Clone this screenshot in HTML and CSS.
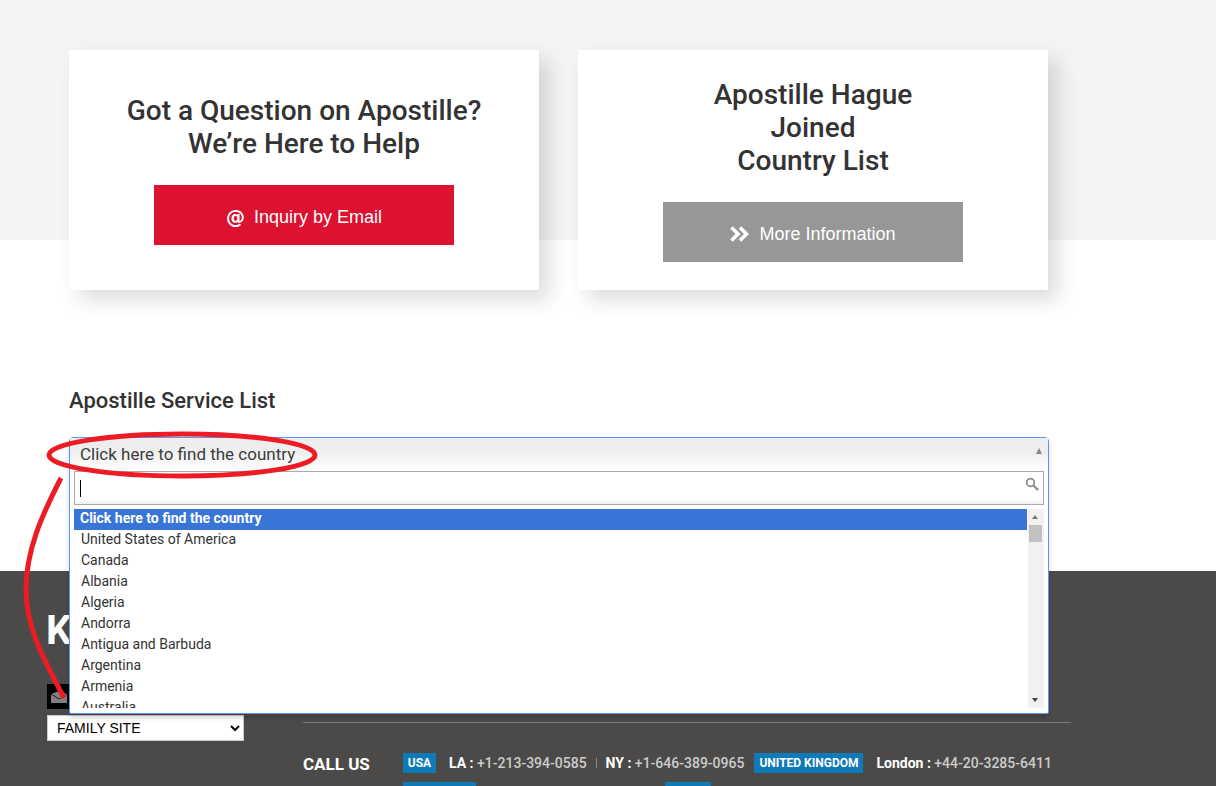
FILE: index.html
```html
<!DOCTYPE html>
<html lang="en">
<head>
<meta charset="utf-8">
<title>Apostille Service</title>
<link rel="stylesheet" href="styles.css">
</head>
<body>
<div class="page">
  <main class="main">
    <div class="cards">
      <section class="card card-a">
        <h2 class="card-title">Got a Question on Apostille?<br>We’re Here to Help</h2>
        <a class="btn btn-red"><span class="at">@</span>Inquiry by Email</a>
      </section>
      <section class="card card-b">
        <h2 class="card-title">Apostille Hague<br>Joined<br>Country List</h2>
        <a class="btn btn-gray">
          <svg class="chev" width="19" height="16" viewBox="0 0 19 16"><path d="M1.500 1.500 8 8l-6.500 6.500M10 1.500 16.500 8 10 14.500" fill="none" stroke="#fff" stroke-width="3.600"/></svg>More Information</a>
      </section>
    </div>
    <h3 class="list-title">Apostille Service List</h3>
  </main>

  <footer class="footer">
    <div class="foot-left">
      <div class="brand">K</div>
      <div class="mail">
        <svg width="16" height="12" viewBox="0 0 16 12"><path d="M0 3 8 0l8 3v9H0z" fill="#808080"/><path d="M0 3l8 5 8-5" fill="none" stroke="#222" stroke-width="1"/></svg>
      </div>
      <select class="family"><option>FAMILY SITE</option></select>
    </div>
    <div class="foot-right">
      <div class="phones">
        <strong class="call">CALL US</strong>
        <span class="tag tag-usa">USA</span>
        <span class="phone la"><b>LA :</b> +1-213-394-0585</span>
        <i class="sep"></i>
        <span class="phone"><b>NY :</b> +1-646-389-0965</span>
        <span class="tag tag-uk">UNITED KINGDOM</span>
        <span class="phone london"><b>London :</b> +44-20-3285-6411</span>
      </div>
      <div class="phones-2">
        <span class="tag tag-a">&nbsp;</span>
        <span class="tag tag-b">&nbsp;</span>
      </div>
    </div>
  </footer>

  <div class="dropdown">
    <div class="dd-head">
      <span>Click here to find the country</span>
      <i class="arrow-up"></i>
    </div>
    <div class="dd-search">
      <i class="caret"></i>
      <svg class="glass" width="14" height="14" viewBox="0 0 14 14"><circle cx="5.500" cy="5.500" r="3.800" fill="none" stroke="#888" stroke-width="1.700"/><path d="M8.500 8.500 13 13" stroke="#888" stroke-width="2.200"/></svg>
    </div>
    <div class="dd-body">
      <ul class="dd-list">
        <li class="active">Click here to find the country</li>
        <li>United States of America</li>
        <li>Canada</li>
        <li>Albania</li>
        <li>Algeria</li>
        <li>Andorra</li>
        <li>Antigua and Barbuda</li>
        <li>Argentina</li>
        <li>Armenia</li>
        <li>Australia</li>
      </ul>
      <div class="scrollbar">
        <i class="sb-up"></i>
        <i class="sb-thumb"></i>
        <i class="sb-down"></i>
      </div>
    </div>
  </div>

  <svg class="marker" width="340" height="720" viewBox="0 0 340 720">
    <ellipse cx="182" cy="455" rx="133" ry="21" fill="none" stroke="#ed1c24" stroke-width="5"/>
    <path d="M61 478C42 515 26 550 26 590C26 630 47 665 64 698" fill="none" stroke="#ed1c24" stroke-width="5"/>
  </svg>
</div>
</body>
</html>
```
FILE: styles.css
```css
* { box-sizing: border-box; }
html, body { margin: 0; padding: 0; background: #fff; }
body { font-family: Roboto, "Liberation Sans", sans-serif; color: #333; }
.page { position: relative; width: 1216px; height: 786px; overflow: hidden; }

.main {
  height: 571px;
  padding: 50px 0 0 69px;
  background: linear-gradient(#f4f4f4 240px, #fff 240px);
}
.cards { display: flex; gap: 39px; }
.card {
  width: 470px;
  height: 240px;
  background: #fff;
  box-shadow: 10px 10px 20px rgba(0,0,0,.14);
  display: flex;
  flex-direction: column;
  align-items: center;
}
.card-a { padding-top: 44px; }
.card-b { padding-top: 28px; }
.card-title {
  margin: 0 0 25px;
  font-size: 28px;
  line-height: 33px;
  font-weight: 500;
  text-align: center;
  color: #333;
}
.btn {
  width: 300px;
  height: 60px;
  padding-top: 4px;
  display: flex;
  align-items: center;
  justify-content: center;
  font-family: "Liberation Sans", Arial, sans-serif;
  font-size: 18px;
  color: #fff;
}
.btn-red { background: #dc1230; }
.btn-gray { background: #979797; }
.at { font-family: "DejaVu Sans", sans-serif; font-weight: 700; font-size: 19px; margin-right: 9px; }
.chev { margin-right: 10px; }
.list-title {
  margin: 97px 0 0;
  font-size: 22px;
  line-height: 28px;
  font-weight: 500;
  color: #333;
}

.footer {
  height: 215px;
  background: #4b4a48;
  display: flex;
  color: #fff;
}
.foot-left { width: 303px; padding: 37px 0 0 47px; }
.brand { font-size: 40px; line-height: 46px; font-weight: 700; color: #fff; margin-left: -1px; }
.mail {
  margin-top: 30px;
  width: 23px;
  height: 25px;
  background: #000;
  display: flex;
  align-items: center;
  justify-content: center;
}
.family {
  display: block;
  margin-top: 6px;
  width: 197px;
  height: 26px;
  padding: 0 0 0 5px;
  background: #fff;
  border: 1px solid #ccc;
  border-radius: 0;
  font-family: "Liberation Sans", Arial, sans-serif;
  font-size: 14px;
  color: #000;
}
.foot-right { width: 768px; padding-top: 151px; }
.phones {
  border-top: 1px solid #7b7a78;
  padding-top: 30px;
  display: flex;
  align-items: center;
  height: 51px;
  white-space: nowrap;
}
.call { width: 100px; font-size: 17px; font-weight: 700; color: #fff; position: relative; top: 1px; }
.tag {
  display: inline-flex;
  align-items: center;
  justify-content: center;
  height: 20px;
  background: #0f7ab8;
  color: #fff;
  font-size: 12px;
  font-weight: 700;
}
.tag-usa { width: 33px; }
.tag-uk { width: 109px; margin-left: 10px; }
.phone { font-size: 14px; font-weight: 500; color: #ccc; }
.phone b { font-weight: 700; color: #fff; }
.la { margin-left: 13px; }
.london { margin-left: 13px; }
.sep { width: 1px; height: 10px; background: #8a8a88; margin: 0 9px; }
.phones-2 { display: flex; padding: 9px 0 0 100px; gap: 189px; }
.tag-a { width: 73px; }
.tag-b { width: 46px; }

.dropdown {
  position: absolute;
  left: 69px;
  top: 437px;
  width: 980px;
  height: 277px;
  background: #fff;
  border: 1px solid #5897fb;
  border-radius: 4px 4px 2px 2px;
  box-shadow: 0 4px 5px rgba(0,0,0,.15);
  padding: 0 4px;
}
.dd-head {
  margin: 0 -4px;
  height: 33px;
  padding: 6px 10px 0;
  background: linear-gradient(#eee, #eee 40%, #fff);
  font-size: 17px;
  line-height: 20px;
  font-weight: 400;
  color: #3c3c3c;
  position: relative;
}
.arrow-up {
  position: absolute;
  right: 6px;
  top: 10px;
  border: 3.500px solid transparent;
  border-top: 0;
  border-bottom: 6px solid #888;
}
.dd-search {
  position: relative;
  height: 34px;
  border: 1px solid #aaa;
  background: linear-gradient(#fff 85%, #eee);
}
.caret { position: absolute; left: 5px; top: 8px; width: 1px; height: 17px; background: #000; }
.glass { position: absolute; right: 4px; top: 5px; }
.dd-body { display: flex; margin-top: 4px; height: 199px; }
.dd-list {
  width: 953px;
  margin: 0;
  padding: 0;
  list-style: none;
  overflow: hidden;
  font-size: 14px;
  color: #333;
}
.dd-list li { height: 21px; line-height: 18px; padding: 0 7px; }
.dd-list .active { background: #3875d7; color: #fff; font-weight: 700; padding: 0 6px; }
.scrollbar {
  position: relative;
  width: 16px;
  margin-left: 1px;
  background: #f1f1f1;
}
.sb-up, .sb-down { position: absolute; left: 4px; border: 3.500px solid transparent; }
.sb-up { top: 6px; border-top: 0; border-bottom: 4px solid #777; }
.sb-down { bottom: 6px; border-bottom: 0; border-top: 4px solid #444; }
.sb-thumb { position: absolute; left: 1px; top: 16px; width: 13px; height: 17px; background: #c1c1c1; }

.marker { position: absolute; left: 0; top: 0; pointer-events: none; }
```
